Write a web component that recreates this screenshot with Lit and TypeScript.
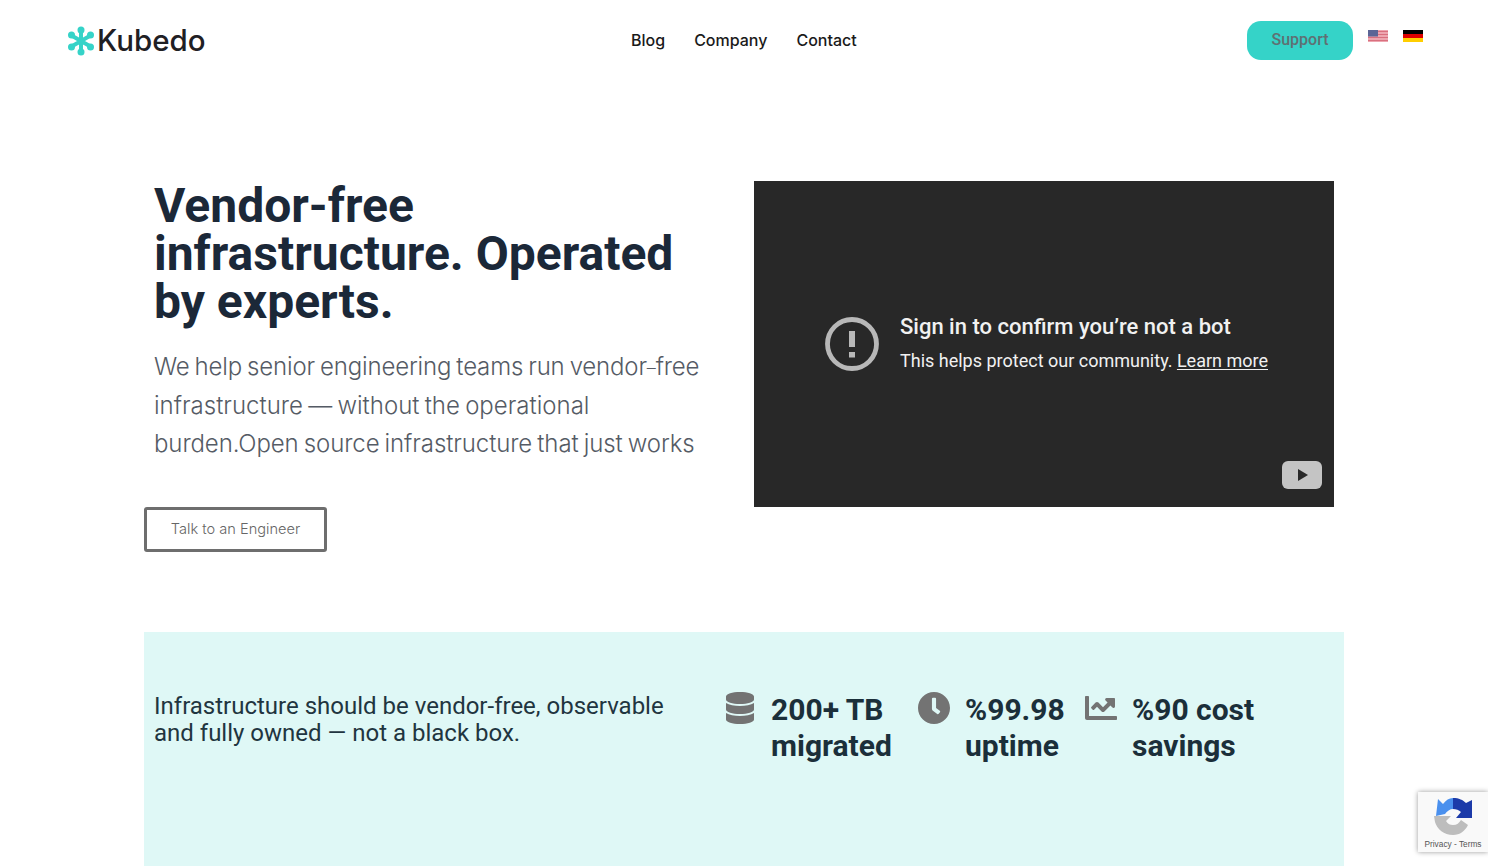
import { LitElement, html, css, svg } from "lit";
import { customElement } from "lit/decorators.js";

const dbIcon = svg`<svg class="stat-icon" viewBox="0 0 448 512" width="28" height="32"><path fill="#737373" d="M448 73.100v45.800C448 159.100 347.700 192 224 192S0 159.100 0 118.900V73.100C0 32.900 100.300 0 224 0s224 32.900 224 73.100zM448 176v102.900C448 319.100 347.700 352 224 352S0 319.100 0 278.900V176c48.100 33.100 136.200 48.600 224 48.600S399.900 209.100 448 176zM448 336v102.900C448 479.100 347.700 512 224 512S0 479.100 0 438.900V336c48.100 33.100 136.200 48.600 224 48.600S399.900 369.100 448 336z"/></svg>`;
const clockIcon = svg`<svg class="stat-icon" viewBox="8 8 496 496" width="32" height="32"><path fill="#737373" d="M256,8C119,8,8,119,8,256S119,504,256,504,504,393,504,256,393,8,256,8Zm92.490,313h0l-20,25a16,16,0,0,1-22.490,2.500h0l-67-49.720a40,40,0,0,1-15-31.230V112a16,16,0,0,1,16-16h32a16,16,0,0,1,16,16V256l58,42.500A16,16,0,0,1,348.490,321Z"/></svg>`;
const chartIcon = svg`<svg class="stat-icon" viewBox="0 0 512 512" width="32" height="32"><path fill="#737373" d="M496 384H64V80c0-8.840-7.160-16-16-16H16C7.160 64 0 71.160 0 80v336c0 17.670 14.330 32 32 32h464c8.840 0 16-7.160 16-16v-32c0-8.840-7.160-16-16-16zM464 96H345.940c-21.380 0-32.090 25.850-16.970 40.970l32.400 32.400L288 242.750l-73.370-73.370c-12.500-12.500-32.760-12.500-45.250 0l-68.690 68.690c-6.250 6.250-6.250 16.380 0 22.630l22.620 22.620c6.250 6.250 16.380 6.250 22.630 0L192 237.250l73.370 73.370c12.500 12.500 32.760 12.500 45.250 0l96-96 32.400 32.400c15.120 15.120 40.970 4.410 40.970-16.970V112c0-8.840-7.160-16-16-16z"/></svg>`;

@customElement("app-root")
export class AppRoot extends LitElement {
  static styles = css`
    :host { display: block; width: 1488px; background: #fff; font-family: Inter, "Liberation Sans", sans-serif; overflow: hidden; height: 866px; position: relative; }
    .nav { display: flex; align-items: center; height: 81px; padding: 0 65px 0 67px; box-sizing: border-box; }
    .logo { display: flex; align-items: center; width: 140px; gap: 2px; }
    .logo span { font-family: Inter, sans-serif; font-size: 29.5px; line-height: 40px; color: #1f2024; font-weight: 500; margin-top: -1px; }
    .links { display: flex; gap: 29px; margin-left: 424px; margin-bottom: 2px; flex: 1; }
    .links a { font-family: Inter, sans-serif; font-weight: 500; font-size: 16px; color: #1a1a1a; line-height: 20px; }
    .support { width: 106px; height: 39px; box-sizing: border-box; padding-bottom: 2px; border-radius: 14px; background: #35d3c8; color: #5f7073; font-family: Roboto, sans-serif; font-weight: 500; font-size: 16px; display: flex; align-items: center; justify-content: center; }
    .flags { display: flex; gap: 15px; margin-left: 15px; margin-top: -10px; }
    .flag { width: 20px; height: 12px; display: block; }
    .hero { display: flex; width: 1200px; margin: 100px 0 0 144px; box-sizing: border-box; padding: 0 10px; height: 451px; }
    .left { width: 600px; flex: none; }
    h1 { margin: 1px 0 0; font-family: Roboto, sans-serif; font-weight: 700; font-size: 48px; line-height: 48px; color: #1b2838; }
    .lead { margin: 22px 0 0; font-family: Inter, sans-serif; font-weight: 300; font-size: 24px; word-spacing: -1.5px; line-height: 38.4px; color: #555b65; white-space: nowrap; }
    .l1 { letter-spacing: -0.17px; }
    .l3 { letter-spacing: -0.1px; }
    .dash { font-size: 18px; vertical-align: 1.5px; }
    .cta { display: flex; align-items: center; justify-content: center; width: 183px; height: 45px; box-sizing: border-box; padding-bottom: 2px; margin: 43.3px 0 0 -10px; border: 3px solid #6e6e6e; border-radius: 3px; font-family: Inter, sans-serif; font-weight: 300; font-size: 14.6px; color: #666; }
    .video { width: 580px; height: 326px; background: #282828; position: relative; display: flex; align-items: flex-start; flex: none; box-sizing: border-box; padding: 134px 0 0 71px; color: #f1f1f1; font-family: Roboto, sans-serif; }
    .warn { flex: none; margin-top: 2px; }
    .vtext { margin-left: 21px; }
    .vtitle { font-size: 22px; font-weight: 500; line-height: 28px; margin-top: -2px; }
    .vsub { font-size: 18px; line-height: 24px; margin-top: 8px; font-weight: 400; }
    .vsub u { text-underline-offset: 2px; }
    .yt { position: absolute; right: 12px; bottom: 18px; }
    .band { width: 1200px; margin-left: 144px; height: 234px; background: #dff8f6; display: flex; box-sizing: border-box; padding: 60px 10px 0; }
    .tagline { width: 570px; flex: none; margin: 1px 0 0; font-family: Roboto, sans-serif; font-weight: 400; font-size: 24px; line-height: 27px; color: #1f3540; }
    .stats { display: flex; margin-left: 2px; }
    .stat { display: flex; gap: 15px; align-items: flex-start; }
    .stat.first { gap: 17px; width: 192px; }
    .stat.second { width: 167px; }
    .stat b { font-family: Roboto, sans-serif; font-weight: 700; font-size: 30px; line-height: 36px; color: #1b2f3a; display: block; }
    .stat-icon { display: block; flex: none; }
    .recaptcha { position: absolute; left: 1418px; top: 792px; width: 70px; height: 60px; background: #f9f9f9; box-shadow: 0 0 5px rgba(0,0,0,.4); display: flex; flex-direction: column; align-items: center; overflow: hidden; }
    .recaptcha svg { margin-top: 6px; }
    .recaptcha span { font-family: "Liberation Sans", sans-serif; font-size: 8.3px; line-height: 10px; color: #555; margin-top: 3px; white-space: nowrap; }
  `;

  render() {
    return html`
      <div class="nav">
        <div class="logo">
          <svg width="28" height="30" viewBox="0 0 28 30">
            <g stroke="#35d3c8" stroke-width="4" stroke-linecap="round">
              <path d="M14 15V4M14 15V26M14 15L4.500 9.500M14 15L23.500 9.500M14 15L4.500 20.500M14 15L23.500 20.500"/>
            </g>
            <g fill="#35d3c8">
              <circle cx="14" cy="4" r="3.500"/><circle cx="14" cy="26" r="3.500"/><circle cx="4.500" cy="9" r="3.500"/><circle cx="23.500" cy="9" r="3.500"/><circle cx="4.500" cy="21" r="3.500"/><circle cx="23.500" cy="21" r="3.500"/>
            </g>
          </svg>
          <span>Kubedo</span>
        </div>
        <div class="links"><a>Blog</a><a>Company</a><a>Contact</a></div>
        <div class="support">Support</div>
        <div class="flags">
          <svg class="flag" viewBox="0 0 20 12">
            <rect width="20" height="12" fill="#f3b9c0"/>
            <path d="M0 1.500h20M0 4.500h20M0 7.500h20M0 10.500h20" stroke="#d9707f" stroke-width="1.300"/>
            <rect width="10" height="6.500" fill="#5c6596"/>
          </svg>
          <svg class="flag" viewBox="0 0 20 12">
            <rect width="20" height="4" fill="#000"/><rect y="4" width="20" height="4" fill="#dd0000"/><rect y="8" width="20" height="4" fill="#ffce00"/>
          </svg>
        </div>
      </div>
      <div class="hero">
        <div class="left">
          <h1>Vendor-free<br />infrastructure. Operated<br />by experts.</h1>
          <p class="lead"><span class="l1">We help senior engineering teams run vendor<span class="dash">–</span>free</span><br />infrastructure — without the operational<br /><span class="l3">burden.Open source infrastructure that just works</span></p>
          <div class="cta">Talk to an Engineer</div>
        </div>
        <div class="video">
          <svg class="warn" width="54" height="54" viewBox="0 0 54 54">
            <circle cx="27" cy="27" r="24.500" fill="none" stroke="#b8b8b8" stroke-width="4.800"/>
            <rect x="24" y="14" width="6" height="16" fill="#b8b8b8"/><rect x="24" y="35" width="6" height="5.500" fill="#b8b8b8"/>
          </svg>
          <div class="vtext">
            <div class="vtitle">Sign in to confirm you’re not a bot</div>
            <div class="vsub">This helps protect our community. <u>Learn more</u></div>
          </div>
          <svg class="yt" width="40" height="28" viewBox="0 0 40 28">
            <rect width="40" height="28" rx="6" fill="#c4c4c4"/><path d="M16 8l10 6-10 6z" fill="#282828"/>
          </svg>
        </div>
      </div>
      <div class="band">
        <p class="tagline">Infrastructure should be vendor-free, observable<br />and fully owned — not a black box.</p>
        <div class="stats">
          <div class="stat first">${dbIcon}<b>200+ TB<br />migrated</b></div>
          <div class="stat second">${clockIcon}<b>%99.98<br />uptime</b></div>
          <div class="stat">${chartIcon}<b>%90 cost<br />savings</b></div>
        </div>
      </div>
      <div class="recaptcha">
        <svg width="38" height="38" viewBox="0 0 38 38">
          <path d="M4 1L9 6C12 2 15 0 19 0V11C16 11 13 13 11 16L2 18Z" fill="#4a90ee"/>
          <path d="M19 0C25 0 29 2 32 5L38 2V20H22L27 14C25 12 22 11 19 11Z" fill="#1c3aa9"/>
          <path d="M0 18H17L12 23C14 26 16 27 19 27C23 27 25 25 27 22L34 27C31 33 26 37 19 37C10 37 3 31 1 24Z" fill="#bdbdbd"/>
        </svg>
        <span>Privacy - Terms</span>
      </div>
    `;
  }
}
